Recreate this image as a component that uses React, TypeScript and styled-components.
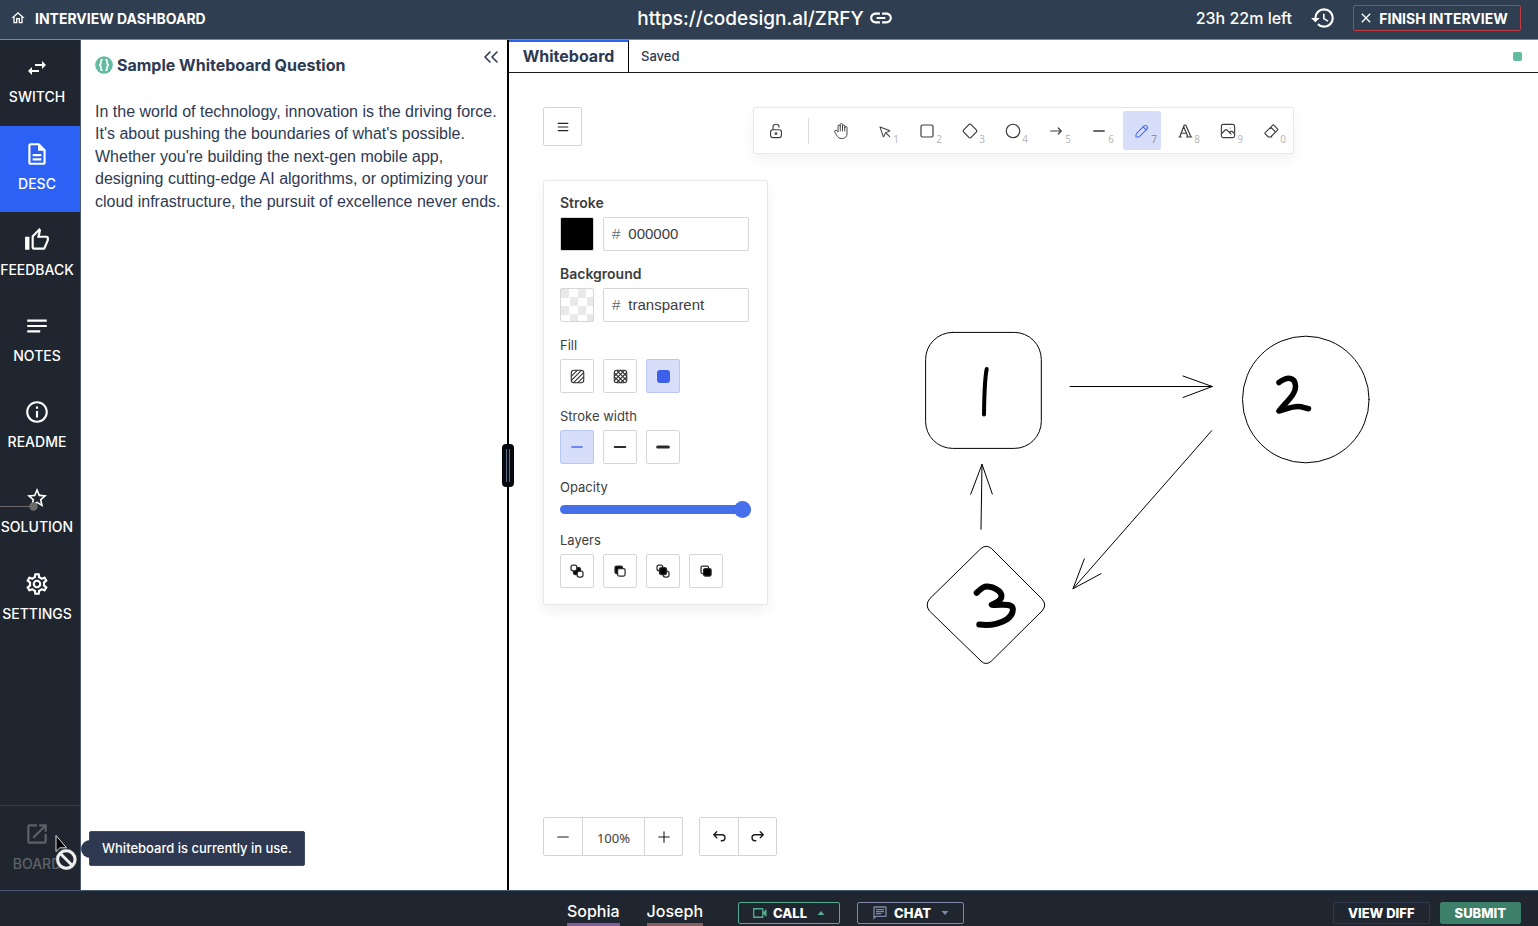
import React from 'react';
import styled, { createGlobalStyle, css } from 'styled-components';
import {
  MdClose,
  MdHistory,
  MdInfoOutline,
  MdLink,
  MdNotes,
  MdOpenInNew,
  MdOutlineChat,
  MdOutlineDescription,
  MdOutlineHome,
  MdOutlineSettings,
  MdOutlineThumbUp,
  MdStarBorder,
  MdSwapHoriz,
} from 'react-icons/md';
import { ChevronsLeft } from 'lucide-react';

const ui = `Inter, "Liberation Sans", sans-serif`;
const body = `"Liberation Sans", Arial, sans-serif`;

const GlobalStyle = createGlobalStyle`
  *, *::before, *::after { box-sizing: border-box; }
  body { margin: 0; font-family: ${ui}; color: #2e3a52; background: #fff; }
  button, input { font: inherit; color: inherit; }
  button { cursor: pointer; }
  h1, p { margin: 0; }
  svg { display: block; flex: none; }
`;

const Page = styled.div`
  display: flex;
  flex-direction: column;
  height: 100vh;
  overflow: hidden;
`;

/* ---------- header ---------- */

const Header = styled.header`
  display: grid;
  grid-template-columns: 1fr auto 1fr;
  align-items: center;
  flex: 0 0 40px;
  padding: 0 17px 3px 10px;
  background: #2f3e50;
  border-bottom: 1px solid #7b8794;
  color: #fff;
`;

const HomeLink = styled.a`
  display: flex;
  align-items: center;
  gap: 9px;
  color: #fff;
  font-size: 14px;
  font-weight: 700;
  text-decoration: none;
`;

const ShareLink = styled.a`
  display: flex;
  align-items: center;
  gap: 4px;
  color: #fff;
  font-size: 19px;
  font-weight: 500;
  text-decoration: none;
`;

const HeaderEnd = styled.div`
  display: flex;
  align-items: center;
  justify-content: flex-end;
`;

const TimeLeft = styled.span`
  font-size: 16px;
  font-weight: 500;
`;

const HistoryButton = styled.button`
  display: flex;
  padding: 0;
  margin: 0 17px 0 18px;
  border: 0;
  background: none;
  color: #fff;
`;

const FinishButton = styled.button`
  display: flex;
  align-items: center;
  justify-content: center;
  gap: 5px;
  width: 168px;
  height: 26px;
  padding: 0 8px 0 0;
  border: 1px solid #c23b40;
  border-radius: 2px;
  background: none;
  color: #fff;
  font-size: 14px;
  font-weight: 700;
`;

/* ---------- side navigation ---------- */

const Main = styled.div`
  display: flex;
  flex: 1;
  min-height: 0;
`;

const Sidebar = styled.nav`
  display: flex;
  flex-direction: column;
  justify-content: space-between;
  flex: 0 0 81px;
  background: #20262f;
  border-right: 1px solid #4b5872;
`;

const NavItem = styled.button<{ $active?: boolean; $disabled?: boolean }>`
  position: relative;
  display: flex;
  flex-direction: column;
  align-items: center;
  justify-content: center;
  gap: 9px;
  width: 100%;
  height: 86px;
  padding: 0 6px 5px 0;
  border: 0;
  background: ${(p) => (p.$active ? '#2b62f5' : 'transparent')};
  color: #fff;
  font-size: 14px;
  font-weight: 500;
  line-height: 16px;
  ${(p) =>
    p.$disabled &&
    css`
      height: 85px;
      padding-bottom: 3px;
      border-top: 1px solid #303b52;
      color: #5d6268;
      cursor: not-allowed;
    `}
`;

const ScrubMarker = styled.svg`
  position: absolute;
  left: 0;
  top: 32px;
`;

const PointerMark = styled.svg`
  position: absolute;
  left: 52px;
  top: 28px;
  z-index: 2;
`;

const Tooltip = styled.span`
  position: absolute;
  left: 89px;
  top: 25px;
  z-index: 1;
  height: 35px;
  padding: 0 12px;
  border: 1px solid #3f4d69;
  border-radius: 2px;
  background: #2e3850;
  color: #fff;
  font-size: 13px;
  font-weight: 500;
  line-height: 33px;
  white-space: nowrap;

  &::before {
    content: '';
    position: absolute;
    left: -9px;
    top: 8px;
    z-index: -1;
    width: 18px;
    height: 18px;
    border-radius: 50%;
    background: #2e3850;
  }
`;

/* ---------- question ---------- */

const Question = styled.section`
  flex: 0 0 426px;
  padding: 13px 0 14px 14px;
`;

const QuestionHead = styled.div`
  display: flex;
  align-items: center;
  gap: 4px;
  height: 23px;
`;

const QuestionTitle = styled.h1`
  flex: 1;
  font-size: 16px;
  font-weight: 700;
`;

const CollapseButton = styled.button`
  display: flex;
  align-self: flex-start;
  margin: -8px 4px 0 0;
  padding: 0;
  border: 0;
  background: none;
`;

const QuestionText = styled.p`
  margin-top: 25px;
  font-family: ${body};
  font-size: 16px;
  line-height: 1.4;
`;

const Splitter = styled.div`
  display: flex;
  align-items: center;
  justify-content: center;
  flex: none;
  width: 2px;
  background: #000;
  cursor: col-resize;
`;

const SplitterGrip = styled.span`
  display: flex;
  justify-content: center;
  gap: 2px;
  flex: none;
  z-index: 1;
  width: 12px;
  height: 43px;
  padding: 5px 0;
  border-radius: 4px;
  background: #05080d;

  &::before,
  &::after {
    content: '';
    width: 1px;
    background: #5e6d88;
  }
`;

/* ---------- workspace ---------- */

const Workspace = styled.section`
  display: flex;
  flex: 1;
  flex-direction: column;
  min-width: 0;
`;

const TabBar = styled.div`
  display: flex;
  align-items: center;
  flex: 0 0 33px;
  border-bottom: 1px solid #16191f;
`;

const Tab = styled.button`
  align-self: stretch;
  width: 120px;
  padding: 0 0 3px;
  border: 0;
  border-top: 2px solid #2b62f5;
  border-right: 1px solid #000;
  background: none;
  font-size: 16px;
  font-weight: 700;
`;

const SaveState = styled.span`
  flex: 1;
  padding-left: 12px;
  font-size: 13px;
  font-weight: 500;
`;

const OnlineDot = styled.span`
  width: 9px;
  height: 9px;
  margin-right: 16px;
  border-radius: 2px;
  background: #63bb9f;
`;

const Canvas = styled.div`
  position: relative;
  flex: 1;
  min-height: 0;
`;

const Drawing = styled.svg`
  position: absolute;
  inset: 0;
  width: 100%;
  height: 100%;
`;

const Controls = styled.div`
  position: relative;
  display: flex;
  flex-direction: column;
  height: 100%;
  padding: 34px;
`;

const TopControls = styled.div`
  display: grid;
  grid-template-columns: 1fr auto 1fr;
  align-items: start;
`;

const MenuButton = styled.button`
  display: flex;
  align-items: center;
  justify-content: center;
  width: 39px;
  height: 39px;
  padding: 0;
  border: 1px solid #d4d4d4;
  border-radius: 2px;
  background: #fff;
  color: #222;
`;

const Toolbar = styled.div`
  display: flex;
  align-items: center;
  gap: 5px;
  height: 47px;
  padding: 0 3px;
  border: 1px solid #e8e8e8;
  border-radius: 2px;
  background: #fff;
  box-shadow: 0 6px 14px rgba(0, 0, 0, 0.05);
`;

const ToolDivider = styled.span`
  width: 1px;
  height: 26px;
  margin: 0 8px;
  background: #dcdcdc;
`;

const Tool = styled.button<{ $active?: boolean }>`
  position: relative;
  display: flex;
  align-items: center;
  justify-content: center;
  width: 38px;
  height: 39px;
  padding: 0;
  border: 0;
  border-radius: 2px;
  background: ${(p) => (p.$active ? '#d7defa' : 'none')};
  color: ${(p) => (p.$active ? '#4a6cf0' : '#3d3d3d')};
`;

const ToolKey = styled.span<{ $active?: boolean }>`
  position: absolute;
  right: 4px;
  bottom: 4px;
  color: ${(p) => (p.$active ? '#8c90a0' : '#b8b8b8')};
  font: 10px/14px 'Noto Sans', sans-serif;
`;

const Properties = styled.form`
  display: flex;
  flex-direction: column;
  gap: 13px;
  width: 225px;
  margin-top: 26px;
  padding: 12px 16px 16px;
  border: 1px solid #e8e8e8;
  border-radius: 2px;
  background: #fff;
  box-shadow: 0 6px 14px rgba(0, 0, 0, 0.06);
`;

const Group = styled.div`
  display: flex;
  flex-direction: column;
  gap: 4px;
`;

const GroupLabel = styled.label<{ $strong?: boolean }>`
  color: #3d3d3d;
  font-size: ${(p) => (p.$strong ? 14 : 13)}px;
  font-weight: ${(p) => (p.$strong ? 600 : 400)};
  line-height: 20px;
`;

const Row = styled.div`
  display: flex;
  gap: 9px;
`;

const Swatch = styled.button<{ $empty?: boolean }>`
  width: 34px;
  height: 34px;
  border: 1px solid #d6d6d6;
  border-radius: 2px;
  background: ${(p) =>
    p.$empty ? 'repeating-conic-gradient(#fff 0 25%, #e9e9e9 0 50%) 0 0 / 17px 17px' : '#000'};
`;

const HexField = styled.div`
  display: flex;
  align-items: center;
  gap: 8px;
  width: 146px;
  height: 34px;
  padding: 0 8px 1px;
  border: 1px solid #d6d6d6;
  border-radius: 2px;
  color: #75787e;
  font-family: ${body};
  font-size: 15px;
`;

const HexInput = styled.input`
  width: 100%;
  min-width: 0;
  padding: 0;
  border: 0;
  outline: 0;
  background: none;
  color: #3d3d3d;
`;

const OptionButton = styled.button<{ $active?: boolean }>`
  display: flex;
  align-items: center;
  justify-content: center;
  width: 34px;
  height: 34px;
  padding: 0;
  border: 1px solid ${(p) => (p.$active ? '#b9c7f8' : '#d6d6d6')};
  border-radius: 2px;
  background: ${(p) => (p.$active ? '#d6def9' : '#fff')};
  color: ${(p) => (p.$active ? '#4a6cf0' : '#2b2b2b')};
`;

const Slider = styled.input`
  appearance: none;
  width: 100%;
  height: 16px;
  margin: 0;
  background: none;

  &::-webkit-slider-runnable-track {
    height: 9px;
    border-radius: 5px;
    background: #4570ea;
  }

  &::-webkit-slider-thumb {
    appearance: none;
    width: 17px;
    height: 17px;
    margin-top: -4px;
    border-radius: 50%;
    background: #4570ea;
  }
`;

const BottomControls = styled.div`
  display: flex;
  gap: 16px;
  margin-top: auto;
`;

const ButtonStrip = styled.div`
  display: flex;
  height: 39px;
  border: 1px solid #d4d4d4;
  border-radius: 2px;
  background: #fff;
`;

const StripButton = styled.button<{ $wide?: boolean }>`
  display: flex;
  align-items: center;
  justify-content: center;
  width: ${(p) => (p.$wide ? 62 : 38)}px;
  padding: 0;
  border: 0;
  background: none;
  color: #1b1b1f;
  font: 13px 'Noto Sans', sans-serif;

  & + & {
    border-left: 1px solid #d4d4d4;
  }
`;

const ZoomValue = styled.span`
  padding-top: 2px;
  color: #3d3d3d;
`;

/* ---------- footer ---------- */

const Footer = styled.footer`
  display: grid;
  grid-template-columns: 1fr auto 1fr;
  align-items: end;
  flex: 0 0 36px;
  padding: 0 17px 0 10px;
  border-top: 1px solid #4b5872;
  background: #20262f;
  color: #fff;
`;

const People = styled.div`
  display: flex;
  grid-column: 2;
  align-items: flex-end;
`;

const Person = styled.span<{ $color: string }>`
  margin-right: 27px;
  padding-bottom: 2px;
  border-bottom: 3px solid ${(p) => p.$color};
  font-size: 16px;
  font-weight: 500;
  line-height: 20px;
`;

const CommButton = styled.button<{ $color: string; $gap: number }>`
  display: flex;
  align-items: center;
  justify-content: center;
  gap: 6px;
  height: 22px;
  margin: 0 0 2px ${(p) => p.$gap}px;
  padding: 0 14px;
  border: 1px solid ${(p) => p.$color};
  border-radius: 2px;
  background: none;
  font-size: 13px;
  font-weight: 800;

  svg {
    color: ${(p) => p.$color};
  }
`;

const Caret = styled.svg`
  margin-left: 4px;
`;

const FooterEnd = styled.div`
  display: flex;
  justify-content: flex-end;
  gap: 10px;
  margin-bottom: 2px;
`;

const FooterButton = styled.button<{ $primary?: boolean }>`
  height: 22px;
  padding: 0 14px;
  border: 1px solid ${(p) => (p.$primary ? '#3d806a' : '#2f3950')};
  border-radius: 2px;
  background: ${(p) => (p.$primary ? '#3d806a' : 'none')};
  font-size: 13px;
  font-weight: 800;
  line-height: 20px;
`;

/* ---------- icons ---------- */

type StrokeIconProps = { box?: number; size?: number; width?: number; children: React.ReactNode };

const StrokeIcon = ({ box = 20, size = 18, width = 1.25, children }: StrokeIconProps) => (
  <svg
    width={size}
    height={size}
    viewBox={`0 0 ${box} ${box}`}
    fill="none"
    stroke="currentColor"
    strokeWidth={width}
    strokeLinecap="round"
    strokeLinejoin="round"
    aria-hidden="true"
  >
    {children}
  </svg>
);

const tools = [
  {
    name: 'Hand',
    icon: (
      <StrokeIcon box={24}>
        <path d="M8 13v-7.5a1.5 1.5 0 0 1 3 0v6.5M11 5.5v-2a1.5 1.5 0 1 1 3 0v8.5M14 5.5a1.5 1.5 0 0 1 3 0v6.5M17 7.5a1.5 1.5 0 0 1 3 0v8.5a6 6 0 0 1-6 6h-2h.208a6 6 0 0 1-5.012-2.7l-.196-.3c-.312-.479-1.407-2.388-3.286-5.728a1.5 1.5 0 0 1 .536-2.022a1.867 1.867 0 0 1 2.28 .28l1.47 1.47" />
      </StrokeIcon>
    ),
  },
  {
    name: 'Selection',
    hint: '1',
    icon: (
      <StrokeIcon box={22}>
        <path d="M6 6l4.153 11.793a.365.365 0 0 0 .331.207.366.366 0 0 0 .332-.207L13 13l4.787-1.994a.355.355 0 0 0 .213-.323.355.355 0 0 0-.213-.323L6 6Z" />
        <path d="m13.5 13.5 4.5 4.5" />
      </StrokeIcon>
    ),
  },
  {
    name: 'Rectangle',
    hint: '2',
    icon: (
      <StrokeIcon box={24} width={1.6}>
        <rect x="4" y="4" width="16" height="16" rx="2" />
      </StrokeIcon>
    ),
  },
  {
    name: 'Diamond',
    hint: '3',
    icon: (
      <StrokeIcon box={24} width={1.6}>
        <path d="M10.5 20.4l-6.9-6.9c-.781-.781-.781-2.219 0-3l6.9-6.9c.781-.781 2.219-.781 3 0l6.9 6.9c.781.781.781 2.219 0 3l-6.9 6.9c-.781.781-2.219.781-3 0z" />
      </StrokeIcon>
    ),
  },
  {
    name: 'Ellipse',
    hint: '4',
    icon: (
      <StrokeIcon box={24} width={1.6}>
        <circle cx="12" cy="12" r="9" />
      </StrokeIcon>
    ),
  },
  {
    name: 'Arrow',
    hint: '5',
    icon: (
      <StrokeIcon box={24} width={1.6}>
        <path d="M5 12h14M15 16l4-4M15 8l4 4" />
      </StrokeIcon>
    ),
  },
  {
    name: 'Line',
    hint: '6',
    icon: (
      <StrokeIcon width={1.5}>
        <path d="M4.167 10h11.666" />
      </StrokeIcon>
    ),
  },
  {
    name: 'Draw',
    hint: '7',
    active: true,
    icon: (
      <StrokeIcon>
        <path d="m7.643 15.69 7.774-7.773a2.357 2.357 0 1 0-3.334-3.334L4.31 12.357a3.333 3.333 0 0 0-.977 2.357v1.953h1.953c.884 0 1.732-.352 2.357-.977Z" />
        <path d="m11.25 5.417 3.333 3.333" />
      </StrokeIcon>
    ),
  },
  {
    name: 'Text',
    hint: '8',
    icon: (
      <StrokeIcon box={24} width={1.6}>
        <path d="M4 20h3M14 20h7M6.9 15h6.9M10.2 6.3L16 20M5 20L11 4h2l7 16" />
      </StrokeIcon>
    ),
  },
  {
    name: 'Image',
    hint: '9',
    icon: (
      <StrokeIcon>
        <path d="M12.5 6.667h.01M4.91 2.625h10.18a2.284 2.284 0 0 1 2.285 2.284v10.182a2.284 2.284 0 0 1-2.284 2.284H4.909a2.284 2.284 0 0 1-2.284-2.284V4.909a2.284 2.284 0 0 1 2.284-2.284Z" />
        <path d="m3.333 12.5 3.334-3.333c.773-.745 1.726-.745 2.5 0l4.166 4.166M11.667 11.667l.833-.834c.774-.744 1.726-.744 2.5 0l1.667 1.667" />
      </StrokeIcon>
    ),
  },
  {
    name: 'Eraser',
    hint: '0',
    icon: (
      <StrokeIcon box={24} width={1.5}>
        <path d="M13 20h-4.5l-4.21-4.3a1 1 0 0 1 0-1.41l10-10a1 1 0 0 1 1.41 0l5 5a1 1 0 0 1 0 1.41l-9.2 9.3M18 13.3l-6.3-6.3" />
      </StrokeIcon>
    ),
  },
];

const fillFrame =
  'M5.879 2.625h8.242a3.27 3.27 0 0 1 3.254 3.254v8.242a3.27 3.27 0 0 1-3.254 3.254H5.88a3.27 3.27 0 0 1-3.254-3.254V5.88A3.27 3.27 0 0 1 5.88 2.626Z';

const HatchIcon = ({ cross = false }: { cross?: boolean }) => {
  const clip = cross ? 'cross-clip' : 'hatch-clip';
  return (
    <StrokeIcon size={17}>
      <clipPath id={clip}>
        <path d={fillFrame} />
      </clipPath>
      <path d={fillFrame} />
      <g clipPath={`url(#${clip})`}>
        <path d="M2.258 15.156 15.156 2.258M7.324 20.222 20.222 7.325M-.222 12.675 12.675-.222M4.518 18.118 17.416 5.22" />
        {cross && (
          <path d="M4.844 2.258 17.742 15.156M-.222 7.324 12.675 20.222M7.325-.222 20.222 12.675M2 5 15.482 18.118" />
        )}
      </g>
    </StrokeIcon>
  );
};

const layerIcons = [
  {
    name: 'Send to back',
    icon: (
      <StrokeIcon box={18}>
        <rect x="5.5" y="5.5" width="7" height="7" rx="1.5" fill="#000" />
        <rect x="3" y="3" width="5.8" height="5.8" rx="2" fill="#fff" />
        <rect x="9.2" y="9.2" width="5.8" height="5.8" rx="2" fill="#fff" />
      </StrokeIcon>
    ),
  },
  {
    name: 'Send backward',
    icon: (
      <StrokeIcon box={18}>
        <rect x="4" y="4" width="7.5" height="7.5" rx="1.5" fill="#000" />
        <rect x="6.6" y="6.6" width="7.5" height="7.5" rx="1.5" fill="#fff" />
      </StrokeIcon>
    ),
  },
  {
    name: 'Bring to front',
    icon: (
      <StrokeIcon box={18}>
        <rect x="3" y="3" width="5.8" height="5.8" rx="2" fill="#fff" />
        <rect x="9.2" y="9.2" width="5.8" height="5.8" rx="2" fill="#fff" />
        <rect x="5.5" y="5.5" width="7" height="7" rx="2" fill="#000" />
      </StrokeIcon>
    ),
  },
  {
    name: 'Bring forward',
    icon: (
      <StrokeIcon box={18}>
        <rect x="4" y="4" width="7.5" height="7.5" rx="1.5" fill="#fff" />
        <rect x="6.6" y="6.6" width="7.5" height="7.5" rx="1.5" fill="#000" />
      </StrokeIcon>
    ),
  },
];

const navItems = [
  { label: 'SWITCH', icon: <MdSwapHoriz size={24} /> },
  { label: 'DESC', icon: <MdOutlineDescription size={26} />, active: true },
  { label: 'FEEDBACK', icon: <MdOutlineThumbUp size={26} /> },
  { label: 'NOTES', icon: <MdNotes size={26} /> },
  { label: 'README', icon: <MdInfoOutline size={26} /> },
  { label: 'SOLUTION', icon: <MdStarBorder size={24} />, marker: true },
  { label: 'SETTINGS', icon: <MdOutlineSettings size={26} /> },
];

const BracesBadge = () => (
  <svg width="18" height="18" viewBox="0 0 18 18" fill="none" aria-hidden="true">
    <circle cx="9" cy="9" r="8.8" fill="#63bb9f" />
    <path
      d="M7.6 3.6C5.8 3.6 5.9 4.8 5.9 6.5 5.9 8 5.4 9 4 9c1.4 0 1.9 1 1.9 2.5 0 1.7-.1 2.9 1.7 2.9M10.4 3.6c1.8 0 1.7 1.2 1.7 2.9 0 1.5.5 2.5 1.9 2.5-1.4 0-1.9 1-1.9 2.5 0 1.7.1 2.9-1.7 2.9"
      stroke="#fff"
      strokeWidth="1.6"
    />
  </svg>
);

const WhiteboardDrawing = () => (
  <Drawing fill="none" stroke="#000" strokeLinecap="round" strokeLinejoin="round" role="img" aria-label="Whiteboard drawing">
    <rect x="416.6" y="259.4" width="115.7" height="116" rx="27" />
    <circle cx="796.8" cy="326.5" r="63.3" />
    <path d="M472 475.5Q477 471 482.5 475.5L533 526Q538.4 532 533 538L482.5 588Q477 593 472 588L420.5 538Q415.8 532 420.5 526Z" />
    <path d="M561 313.5H703.3M674 303l29.3 10.5L674 324.5" />
    <path d="M702.7 357.7 564 515.7M575.3 486 564 515.7l28-15" />
    <path d="M472 456.3 473 391.3M461.7 421.3 473 391.3l10.3 29.7" />
    <path strokeWidth="4" d="M477.7 296C475.6 306 475.3 318 475 341.5" />
    <path strokeWidth="5.5" d="M770 309.5C778 303.5 786 303.5 786.5 313 787 321 778 328 770 338 778 336 782 333.5 789 333.5 794 333.5 795 335 799.5 335.7" />
    <path strokeWidth="6" d="M467.7 519.7C473 515 475 513 479 513.5 485 514 492 518 492.5 522.5 493 527 487 530 482.7 531.7 489 532.5 494 531 499 532 504 533 504.5 535 503.5 539 502 545 494 549 487 550.8 481 552.3 475 552 470.3 551.5" />
  </Drawing>
);

export default function App() {
  return (
    <>
      <GlobalStyle />
      <Page>
        <Header>
          <HomeLink href="#dashboard">
            <MdOutlineHome size={16} />
            INTERVIEW DASHBOARD
          </HomeLink>
          <ShareLink href="#share">
            https://codesign.al/ZRFY
            <MdLink size={26} />
          </ShareLink>
          <HeaderEnd>
            <TimeLeft>23h 22m left</TimeLeft>
            <HistoryButton aria-label="History">
              <MdHistory size={26} />
            </HistoryButton>
            <FinishButton>
              <MdClose size={16} />
              FINISH INTERVIEW
            </FinishButton>
          </HeaderEnd>
        </Header>

        <Main>
          <Sidebar>
            <div>
              {navItems.map((item) => (
                <NavItem key={item.label} $active={item.active}>
                  {item.icon}
                  {item.label}
                  {item.marker && (
                    <ScrubMarker width="40" height="10" viewBox="0 0 40 10" aria-hidden="true">
                      <path d="M0 4.5H30" stroke="#6b6668" />
                      <circle cx="33.5" cy="4.5" r="4.2" fill="#6b6b6b" />
                    </ScrubMarker>
                  )}
                </NavItem>
              ))}
            </div>
            <NavItem $disabled aria-disabled="true">
              <MdOpenInNew size={26} />
              BOARD
              <Tooltip role="tooltip">Whiteboard is currently in use.</Tooltip>
              <PointerMark width="28" height="38" viewBox="0 0 28 38" aria-hidden="true">
                <path d="M4 1.5V17.5L7.8 13.8H14.5Z" fill="#000" stroke="#ddd" />
                <circle cx="14.3" cy="25.5" r="8.5" fill="none" stroke="#555" strokeWidth="4.5" />
                <circle cx="14.3" cy="25.5" r="8.7" fill="#20262f" stroke="#eee" strokeWidth="3" />
                <path d="M8.3 19.5l12 12" stroke="#eee" strokeWidth="3" />
              </PointerMark>
            </NavItem>
          </Sidebar>

          <Question>
            <QuestionHead>
              <BracesBadge />
              <QuestionTitle>Sample Whiteboard Question</QuestionTitle>
              <CollapseButton aria-label="Collapse panel">
                <ChevronsLeft size={24} strokeWidth={1.6} />
              </CollapseButton>
            </QuestionHead>
            <QuestionText>
              In the world of technology, innovation is the driving force. It's about pushing the boundaries of what's
              possible. Whether you're building the next-gen mobile app, designing cutting-edge AI algorithms, or
              optimizing your cloud infrastructure, the pursuit of excellence never ends.
            </QuestionText>
          </Question>

          <Splitter role="separator" aria-orientation="vertical">
            <SplitterGrip />
          </Splitter>

          <Workspace>
            <TabBar>
              <Tab>Whiteboard</Tab>
              <SaveState>Saved</SaveState>
              <OnlineDot />
            </TabBar>
            <Canvas>
              <WhiteboardDrawing />
              <Controls>
                <TopControls>
                  <MenuButton aria-label="Menu">
                    <StrokeIcon size={16} width={1.5}>
                      <path d="M4 5.5h12M4 10h12M4 14.5h12" />
                    </StrokeIcon>
                  </MenuButton>
                  <Toolbar>
                    <Tool aria-label="Lock">
                      <StrokeIcon>
                        <path d="M13.542 8.542H6.458a2.5 2.5 0 0 0-2.5 2.5v3.75a2.5 2.5 0 0 0 2.5 2.5h7.084a2.5 2.5 0 0 0 2.5-2.5v-3.75a2.5 2.5 0 0 0-2.5-2.5Z" />
                        <circle cx="10" cy="12.9" r="1" />
                        <path d="M6.667 8.333V5.417C6.667 3.806 8.159 2.5 10 2.5c1.841 0 3.333 1.306 3.333 2.917" />
                      </StrokeIcon>
                    </Tool>
                    <ToolDivider />
                    {tools.map((tool) => (
                      <Tool key={tool.name} aria-label={tool.name} $active={tool.active}>
                        {tool.icon}
                        {tool.hint && <ToolKey $active={tool.active}>{tool.hint}</ToolKey>}
                      </Tool>
                    ))}
                  </Toolbar>
                </TopControls>

                <Properties>
                  <Group>
                    <GroupLabel $strong htmlFor="stroke">Stroke</GroupLabel>
                    <Row>
                      <Swatch type="button" aria-label="Pick stroke" />
                      <HexField>
                        #<HexInput id="stroke" defaultValue="000000" />
                      </HexField>
                    </Row>
                  </Group>
                  <Group>
                    <GroupLabel $strong htmlFor="background">Background</GroupLabel>
                    <Row>
                      <Swatch type="button" $empty aria-label="Pick background" />
                      <HexField>
                        #<HexInput id="background" defaultValue="transparent" />
                      </HexField>
                    </Row>
                  </Group>
                  <Group>
                    <GroupLabel as="span">Fill</GroupLabel>
                    <Row>
                      <OptionButton type="button" aria-label="Hachure">
                        <HatchIcon />
                      </OptionButton>
                      <OptionButton type="button" aria-label="Cross-hatch">
                        <HatchIcon cross />
                      </OptionButton>
                      <OptionButton type="button" aria-label="Solid" $active>
                        <svg width="13" height="13" aria-hidden="true">
                          <rect width="13" height="13" rx="3" fill="#3c60ea" />
                        </svg>
                      </OptionButton>
                    </Row>
                  </Group>
                  <Group>
                    <GroupLabel as="span">Stroke width</GroupLabel>
                    <Row>
                      {[1.4, 2.4, 3.6].map((width, i) => (
                        <OptionButton key={width} type="button" aria-label={`Width ${i + 1}`} $active={i === 0}>
                          <StrokeIcon width={width}>
                            <path d="M4.167 10h11.666" />
                          </StrokeIcon>
                        </OptionButton>
                      ))}
                    </Row>
                  </Group>
                  <Group>
                    <GroupLabel htmlFor="opacity">Opacity</GroupLabel>
                    <Slider id="opacity" type="range" min="0" max="100" defaultValue="100" />
                  </Group>
                  <Group>
                    <GroupLabel as="span">Layers</GroupLabel>
                    <Row>
                      {layerIcons.map((layer) => (
                        <OptionButton key={layer.name} type="button" aria-label={layer.name}>
                          {layer.icon}
                        </OptionButton>
                      ))}
                    </Row>
                  </Group>
                </Properties>

                <BottomControls>
                  <ButtonStrip>
                    <StripButton aria-label="Zoom out">
                      <StrokeIcon>
                        <path d="M4.167 10h11.666" />
                      </StrokeIcon>
                    </StripButton>
                    <StripButton $wide>
                      <ZoomValue>100%</ZoomValue>
                    </StripButton>
                    <StripButton aria-label="Zoom in">
                      <StrokeIcon>
                        <path d="M10 4.167v11.666M4.167 10h11.666" />
                      </StrokeIcon>
                    </StripButton>
                  </ButtonStrip>
                  <ButtonStrip>
                    <StripButton aria-label="Undo">
                      <StrokeIcon width={1.5}>
                        <path d="M7.5 10.833 4.167 7.5 7.5 4.167M4.167 7.5h9.166a3.333 3.333 0 0 1 0 6.667H12.5" />
                      </StrokeIcon>
                    </StripButton>
                    <StripButton aria-label="Redo">
                      <StrokeIcon width={1.5}>
                        <path d="M12.5 10.833 15.833 7.5 12.5 4.167M15.833 7.5H6.667a3.333 3.333 0 1 0 0 6.667H7.5" />
                      </StrokeIcon>
                    </StripButton>
                  </ButtonStrip>
                </BottomControls>
              </Controls>
            </Canvas>
          </Workspace>
        </Main>

        <Footer>
          <People>
            <Person $color="#7d5c98">Sophia</Person>
            <Person $color="#835f5d">Joseph</Person>
            <CommButton $color="#55ad91" $gap={8}>
              <svg width="14" height="10" viewBox="0 0 14 10" fill="none" aria-hidden="true">
                <path d="M.75.75h9v8.5h-9z" stroke="currentColor" strokeWidth="1.3" />
                <path d="M10 4.2 13.5 1v8L10 5.8Z" fill="currentColor" />
              </svg>
              CALL
              <Caret width="8" height="4" viewBox="0 0 8 4" aria-hidden="true">
                <path d="M4 0 7.5 4H.5Z" fill="currentColor" />
              </Caret>
            </CommButton>
            <CommButton $color="#7f88a8" $gap={17}>
              <MdOutlineChat size={16} />
              CHAT
              <Caret width="8" height="4" viewBox="0 0 8 4" aria-hidden="true">
                <path d="M.5 0h7L4 4Z" fill="currentColor" />
              </Caret>
            </CommButton>
          </People>
          <FooterEnd>
            <FooterButton>VIEW DIFF</FooterButton>
            <FooterButton $primary>SUBMIT</FooterButton>
          </FooterEnd>
        </Footer>
      </Page>
    </>
  );
}
